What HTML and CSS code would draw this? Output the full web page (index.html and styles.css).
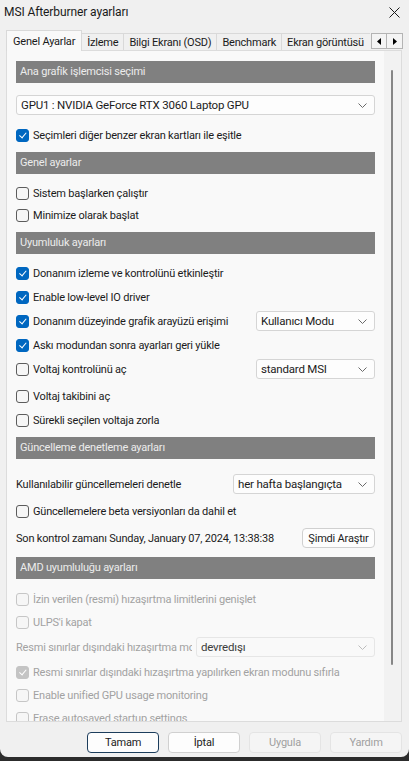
FILE: index.html
```html
<!DOCTYPE html>
<html lang="tr">
<head>
    <meta charset="UTF-8">
    <meta name="viewport" content="width=device-width, initial-scale=1.0">
    <title>MSI Afterburner ayarları</title>
    <link rel="stylesheet" href="styles.css">
</head>
<body>
<div class="window">
    <div class="titlebar">
        <span class="title">MSI Afterburner ayarları</span>
        <svg class="close" width="11" height="11" viewBox="0 0 11 11">
            <path d="M0.5 0.5 L10.5 10.5 M10.5 0.5 L0.5 10.5" stroke="#1a1a1a" stroke-width="1"/>
        </svg>
    </div>

    <div class="tabs">
        <div class="tab active">Genel Ayarlar</div>
        <div class="tab">İzleme</div>
        <div class="tab">Bilgi Ekranı (OSD)</div>
        <div class="tab">Benchmark</div>
        <div class="tab last">Ekran görüntüsü</div>
        <div class="tab-arrows">
            <span class="arrow"><svg width="4" height="7" viewBox="0 0 4 7"><path d="M4 0 L0 3.5 L4 7 Z" fill="#000"/></svg></span>
            <span class="arrow"><svg width="4" height="7" viewBox="0 0 4 7"><path d="M0 0 L4 3.5 L0 7 Z" fill="#000"/></svg></span>
        </div>
    </div>

    <div class="panel">
        <div class="scroller">
            <div class="content">
                <div class="head">Ana grafik işlemcisi seçimi</div>
                <div class="group first">
                    <div class="select wide">GPU1 : NVIDIA GeForce RTX 3060 Laptop GPU<svg class="chev" width="9" height="5" viewBox="0 0 9 5"><path d="M0.5 0.5 L4.5 4.5 L8.5 0.5" fill="none" stroke="currentColor"/></svg></div>
                    <label class="row"><span class="box checked"></span>Seçimleri diğer benzer ekran kartları ile eşitle</label>
                </div>

                <div class="head">Genel ayarlar</div>
                <div class="group tight">
                    <label class="row"><span class="box"></span>Sistem başlarken çalıştır</label>
                    <label class="row"><span class="box"></span>Minimize olarak başlat</label>
                </div>

                <div class="head">Uyumluluk ayarları</div>
                <div class="group">
                    <label class="row"><span class="box checked"></span>Donanım izleme ve kontrolünü etkinleştir</label>
                    <label class="row"><span class="box checked"></span>Enable low-level IO driver</label>
                    <div class="row split">
                        <label class="row"><span class="box checked"></span>Donanım düzeyinde grafik arayüzü erişimi</label>
                        <div class="select mode">Kullanıcı Modu<svg class="chev" width="9" height="5" viewBox="0 0 9 5"><path d="M0.5 0.5 L4.5 4.5 L8.5 0.5" fill="none" stroke="currentColor"/></svg></div>
                    </div>
                    <label class="row"><span class="box checked"></span>Askı modundan sonra ayarları geri yükle</label>
                    <div class="row split">
                        <label class="row"><span class="box"></span>Voltaj kontrolünü aç</label>
                        <div class="select mode">standard MSI<svg class="chev" width="9" height="5" viewBox="0 0 9 5"><path d="M0.5 0.5 L4.5 4.5 L8.5 0.5" fill="none" stroke="currentColor"/></svg></div>
                    </div>
                    <label class="row loose"><span class="box"></span>Voltaj takibini aç</label>
                    <label class="row"><span class="box"></span>Sürekli seçilen voltaja zorla</label>
                </div>

                <div class="head">Güncelleme denetleme ayarları</div>
                <div class="group update">
                    <div class="row split">
                        <span>Kullanılabilir güncellemeleri denetle</span>
                        <div class="select period">her hafta başlangıçta<svg class="chev" width="9" height="5" viewBox="0 0 9 5"><path d="M0.5 0.5 L4.5 4.5 L8.5 0.5" fill="none" stroke="currentColor"/></svg></div>
                    </div>
                    <label class="row"><span class="box"></span>Güncellemelere beta versiyonları da dahil et</label>
                    <div class="row split">
                        <span>Son kontrol zamanı Sunday, January 07, 2024, 13:38:38</span>
                        <button class="btn small">Şimdi Araştır</button>
                    </div>
                </div>

                <div class="head amd-head">AMD uyumluluğu ayarları</div>
                <div class="group amd disabled">
                    <label class="row"><span class="box"></span>İzin verilen (resmi) hızaşırtma limitlerini genişlet</label>
                    <label class="row"><span class="box"></span>ULPS'i kapat</label>
                    <div class="row split spaced">
                        <span class="cut">Resmi sınırlar dışındaki hızaşırtma modu</span>
                        <div class="select off">devredışı<svg class="chev" width="9" height="5" viewBox="0 0 9 5"><path d="M0.5 0.5 L4.5 4.5 L8.5 0.5" fill="none" stroke="currentColor"/></svg></div>
                    </div>
                    <label class="row"><span class="box checked"></span>Resmi sınırlar dışındaki hızaşırtma yapılırken ekran modunu sıfırla</label>
                    <label class="row"><span class="box"></span>Enable unified GPU usage monitoring</label>
                    <label class="row"><span class="box"></span>Erase autosaved startup settings</label>
                </div>
            </div>
            <div class="scrollbar"><div class="thumb"></div></div>
        </div>
    </div>

    <div class="buttons">
        <button class="btn focus">Tamam</button>
        <button class="btn">İptal</button>
        <button class="btn" disabled>Uygula</button>
        <button class="btn" disabled>Yardım</button>
    </div>
</div>
</body>
</html>
```

FILE: styles.css
```css
body {
    margin: 0;
    background-color: #2c2c2c;
    font-family: Roboto, "Noto Sans", sans-serif;
    font-size: 11px;
    letter-spacing: -0.2px;
    color: #1b1b1b;
}
.window {
    width: 409px;
    height: 757px;
    background-color: #f0f0f0;
    border-radius: 0 0 8px 8px;
    display: flex;
    flex-direction: column;
    overflow: hidden;
}

/* title bar */
.titlebar {
    height: 24px;
    display: flex;
    align-items: center;
    justify-content: space-between;
    padding: 0 9px 0 4px;
}
.title {
    font-size: 12px;
    letter-spacing: -0.1px;
    color: #1a1a1a;
}
.close {
    display: block;
}

/* tab strip */
.tabs {
    display: flex;
    align-items: flex-end;
    height: 20px;
    margin-top: 6px;
    padding-left: 6px;
    position: relative;
    z-index: 1;
}
.tab {
    height: 17px;
    line-height: 17px;
    padding: 0 5px;
    border: 1px solid #d9d9d9;
    border-bottom: none;
    border-left: none;
    box-sizing: border-box;
    background-color: #f0f0f0;
    white-space: nowrap;
}
.tab.active {
    height: 21px;
    line-height: 22px;
    margin-bottom: -1px;
    padding: 0 6px;
    border-left: 1px solid #d9d9d9;
    background-color: #f9f9f9;
}
.tab.last {
    flex: 1;
    overflow: hidden;
    border-right: none;
}
.tab-arrows {
    display: flex;
    align-self: flex-start;
    margin: 3px 6px 0 1px;
}
.arrow {
    width: 16px;
    height: 16px;
    box-sizing: border-box;
    border: 1px solid #b4b4b4;
    background-color: #f4f4f4;
    display: flex;
    align-items: center;
    justify-content: center;
}
.arrow + .arrow {
    border-left: none;
}

/* page panel */
.panel {
    margin: 0 7px 0 6px;
    height: 672px;
    border: 1px solid #dcdcdc;
    background-color: #f9f9f9;
    box-sizing: border-box;
}
.scroller {
    display: flex;
    height: 100%;
    overflow: hidden;
}
.content {
    flex: 1;
    padding: 10px 9px 0 9px;
}
.scrollbar {
    width: 17px;
    background-color: #f2f2f2;
    position: relative;
    flex-shrink: 0;
}
.thumb {
    position: absolute;
    left: 7px;
    top: 19px;
    width: 2px;
    height: 595px;
    border-radius: 1px;
    background-color: #868686;
}

/* section headers */
.head {
    height: 22px;
    line-height: 22px;
    padding-left: 4px;
    background-color: #808080;
    color: #ececec;
    margin-top: 7px;
}
.head:first-child {
    margin-top: 0;
}
.head.amd-head {
    margin-top: 9px;
}

/* rows */
.group {
    display: flex;
    flex-direction: column;
    gap: 4px;
    margin-top: 9px;
}
.group.first {
    margin-top: 12px;
    gap: 10px;
}
.group.tight {
    gap: 2px;
}
.group.update {
    margin-top: 15px;
    gap: 7px;
}
.group.amd {
    margin-top: 10px;
    gap: 3px;
}
.row {
    display: flex;
    align-items: center;
    height: 20px;
    white-space: nowrap;
}
.row.split {
    justify-content: space-between;
}
.row.loose {
    margin-top: 3px;
}
.row.spaced {
    margin: 2px 0;
}
.cut {
    width: 176px;
    overflow: hidden;
}

/* checkboxes */
.box {
    width: 13px;
    height: 13px;
    box-sizing: border-box;
    border: 1px solid #5c5c5c;
    border-radius: 3px;
    background-color: #f6f6f6;
    margin-right: 4px;
    flex-shrink: 0;
    position: relative;
}
.box.checked {
    border-color: #0067c0;
    background-color: #0067c0;
}
.box.checked::after {
    content: "";
    position: absolute;
    left: 3.5px;
    top: 1.5px;
    width: 3px;
    height: 5.5px;
    border: solid #fff;
    border-width: 0 1px 1px 0;
    transform: rotate(40deg);
}

/* drop-down lists */
.select {
    height: 20px;
    line-height: 18px;
    box-sizing: border-box;
    border: 1px solid #d5d5d5;
    border-radius: 3px;
    background-color: #fdfdfd;
    padding-left: 4px;
    position: relative;
    font-size: 11.5px;
    color: #1b1b1b;
}
.select.wide {
    width: 100%;
}
.select.mode {
    width: 119px;
}
.select.period {
    width: 142px;
}
.select.off {
    width: 179px;
    color: #3c3c3c;
    background-color: #f9f9f9;
    border-color: #e6e6e6;
}
.chev {
    position: absolute;
    right: 7px;
    top: 7px;
    color: #6a6a6a;
}
.select.off .chev {
    color: #bcbcbc;
}

/* disabled group */
.disabled {
    color: #a2a2a2;
}
.disabled .box {
    border-color: #c6c6c6;
}
.disabled .box.checked {
    border-color: #c4c4c4;
    background-color: #c4c4c4;
}

/* buttons */
.btn {
    width: 72px;
    height: 21px;
    font-family: inherit;
    font-size: 11px;
    letter-spacing: -0.2px;
    color: #1b1b1b;
    background-color: #fdfdfd;
    border: 1px solid #d0d0d0;
    border-radius: 4px;
    padding: 0;
}
.btn.small {
    width: 73px;
    height: 20px;
}
.btn.focus {
    border: 1.5px solid #1c3d5c;
}
.btn:disabled {
    color: #a0a0a0;
    background-color: #f5f5f5;
    border-color: #e4e4e4;
}
.buttons {
    display: flex;
    justify-content: flex-end;
    gap: 9px;
    padding: 10px 7px 0 0;
}
```
